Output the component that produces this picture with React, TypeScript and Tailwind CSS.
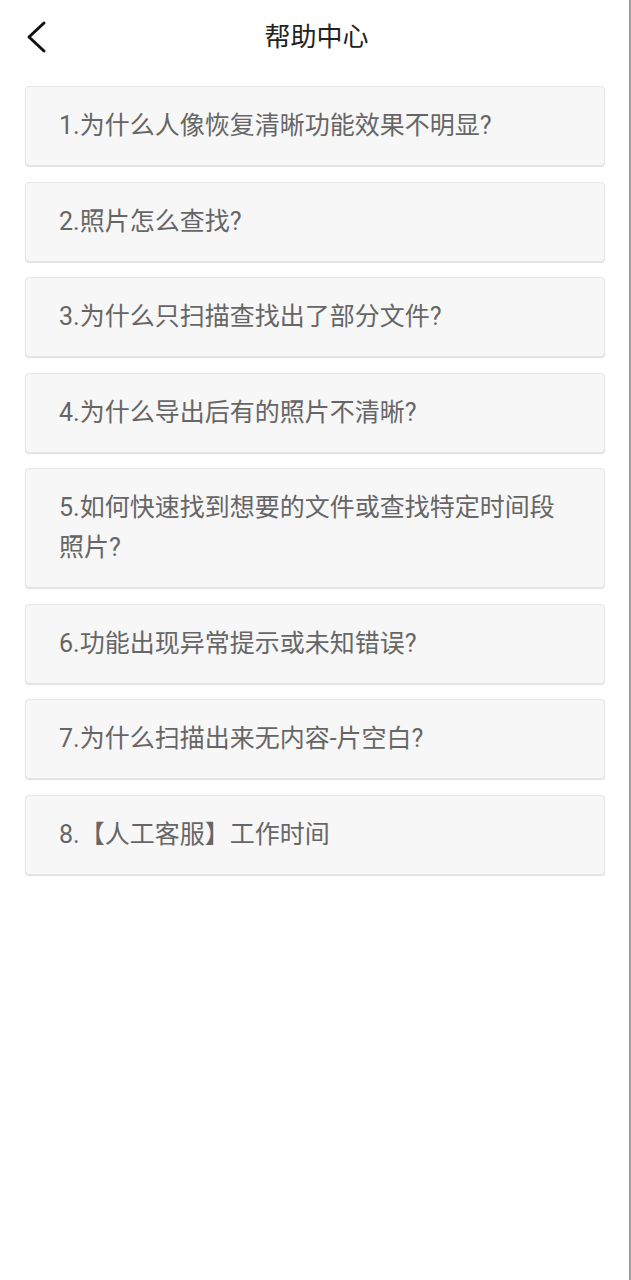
const QUESTIONS = [
  "1.为什么人像恢复清晰功能效果不明显?",
  "2.照片怎么查找?",
  "3.为什么只扫描查找出了部分文件?",
  "4.为什么导出后有的照片不清晰?",
  "5.如何快速找到想要的文件或查找特定时间段照片?",
  "6.功能出现异常提示或未知错误?",
  "7.为什么扫描出来无内容-片空白?",
  "8.【人工客服】工作时间",
];

export default function App() {
  return (
    <div
      className="min-h-[1280px] w-full bg-white border-r-2 border-[#9e9e9e]"
      style={{ fontFamily: '"Roboto", "Noto Sans CJK SC", sans-serif' }}
    >
      {/* Header */}
      <div className="relative h-[75px] flex items-center justify-center">
        <button className="absolute left-[24px] top-[20px] p-0">
          <svg width="24" height="34" viewBox="0 0 24 34" fill="none" stroke="#111" strokeWidth="3" strokeLinecap="round" strokeLinejoin="round">
            <polyline points="20 3 5 17 20 31" />
          </svg>
        </button>
        <h1 className="text-[26px] text-[#222] leading-none -mt-[2px] ml-[4px]">帮助中心</h1>
      </div>

      {/* Question list */}
      <div className="flex flex-col gap-[15.5px] pl-[25px] pr-[24px] pt-[11px]">
        {QUESTIONS.map((q) => (
          <div
            key={q}
            className="min-h-[80px] rounded-[4px] border border-[#e6e6e6] bg-[#f7f7f7] shadow-[0_1px_1px_rgba(0,0,0,0.12)] flex items-center pl-[33px] pr-[28px] py-[19px]"
          >
            <p className="text-[25px] leading-[40px] text-[#666]">{q}</p>
          </div>
        ))}
      </div>
    </div>
  );
}
